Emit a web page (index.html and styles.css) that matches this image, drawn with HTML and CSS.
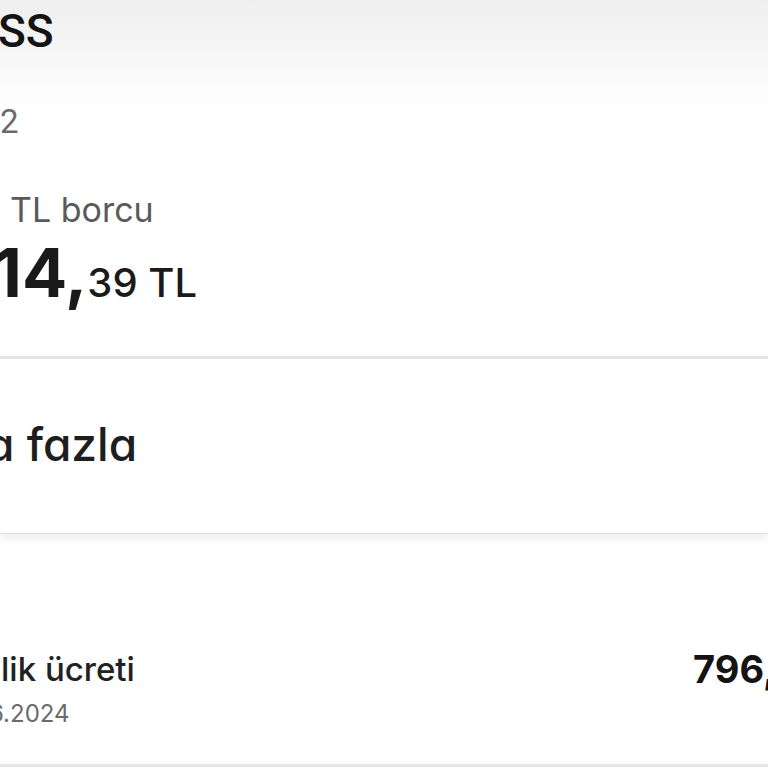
FILE: index.html
```html
<!DOCTYPE html>
<html lang="tr">
<head>
<meta charset="utf-8">
<title>Fatura</title>
<link rel="stylesheet" href="styles.css">
</head>
<body>
  <div class="screen">
    <header class="top">
      <h1 class="top-title">SS</h1>
      <p class="top-sub">-2</p>
    </header>

    <section class="debt">
      <p class="debt-label">TL borcu</p>
      <p class="debt-amount"><span class="debt-int">14,</span><span class="debt-dec">39 TL</span></p>
    </section>

    <div class="divider"></div>

    <section class="card">
      <p class="card-text">a fazla</p>
    </section>

    <section class="list">
      <div class="row">
        <div class="row-main">
          <p class="row-title">lik ücreti</p>
          <p class="row-date">6.2024</p>
        </div>
        <div class="row-amount">796,</div>
      </div>
      <div class="divider divider-bottom"></div>
    </section>
  </div>
</body>
</html>
```

FILE: styles.css
```css
* {
  box-sizing: border-box;
}

html,
body {
  margin: 0;
  padding: 0;
  background: #ffffff;
}

body {
  overflow: hidden;
  font-family: Inter, "Noto Sans", "Liberation Sans", sans-serif;
  font-feature-settings: "cv11";
  color: #1c1c1c;
}

p,
h1 {
  margin: 0;
}

.screen {
  width: 768px;
  height: 768px;
  overflow: hidden;
}

/* Top bar with a soft grey fade */
.top {
  padding-top: 1px;
  background: linear-gradient(to bottom, #efefef 0px, #f7f7f7 60px, #ffffff 110px);
}

.top-title {
  font-family: Roboto, "Liberation Sans", sans-serif;
  font-weight: 500;
  font-size: 46px;
  line-height: 60px;
  margin-left: -2px;
  color: #141414;
}

.top-sub {
  font-family: Roboto, "Liberation Sans", sans-serif;
  font-size: 33px;
  line-height: 40px;
  margin-top: 41px;
  margin-left: -9px;
  color: #6a6a6a;
}

/* Outstanding balance */
.debt {
  padding-top: 48px;
}

.debt-label {
  font-size: 34px;
  line-height: 40px;
  padding-left: 10px;
  color: #5a5a5a;
}

.debt-amount {
  margin-top: 13px;
  font-size: 40px;
  line-height: 60px;
  margin-left: -7px;
  color: #1a1a1a;
  white-space: nowrap;
}

.debt-int {
  font-size: 67px;
  font-weight: 700;
  line-height: 60px;
}

.debt-dec {
  font-weight: 500;
  line-height: 60px;
}

.divider {
  height: 3px;
  background: #e6e6e6;
  margin-top: 43px;
}

/* Info card */
.card {
  padding: 60px 0 64px;
  border-bottom: 1px solid #dedede;
  box-shadow: 0 4px 9px rgba(0, 0, 0, 0.07);
  background: #ffffff;
}

.card-text {
  font-size: 46px;
  font-weight: 500;
  line-height: 50px;
  margin-left: -14px;
  color: #1e1e1e;
  white-space: nowrap;
}

/* Invoice line items */
.list {
  padding-top: 115px;
}

.row {
  display: flex;
  align-items: flex-start;
}

.row-main {
  flex: 1;
  min-width: 0;
}

.row-title {
  font-size: 33px;
  font-weight: 500;
  line-height: 40px;
  padding-left: 1px;
  color: #222222;
}

.row-date {
  font-size: 24px;
  line-height: 32px;
  margin-top: 9px;
  margin-left: -11px;
  color: #6b6b6b;
}

.row-amount {
  flex: 0 0 75px;
  min-width: 0;
  font-size: 38px;
  font-weight: 700;
  line-height: 44px;
  margin-top: -2px;
  white-space: nowrap;
  color: #141414;
}

.divider-bottom {
  margin-top: 34px;
}
```
